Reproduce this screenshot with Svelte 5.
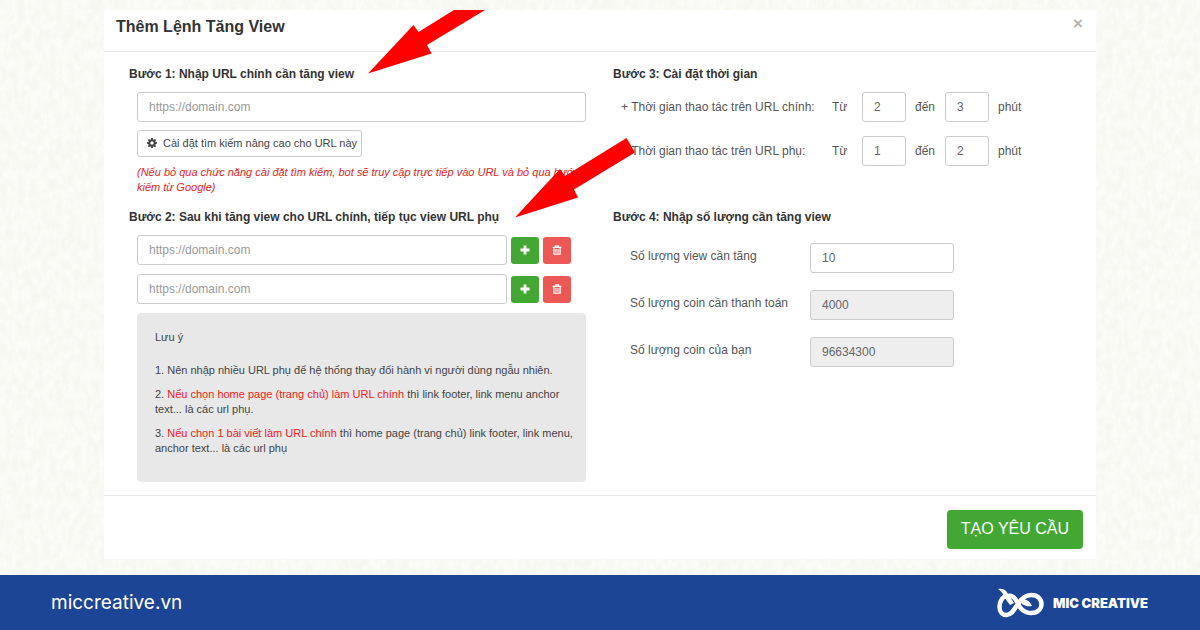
<script lang="ts">
    let mainUrl = $state("");
    let subUrls = $state(["", ""]);
    let times = $state([
        { id: "main", label: "Thời gian thao tác trên URL chính:", from: "2", to: "3" },
        { id: "sub", label: "Thời gian thao tác trên URL phụ:", from: "1", to: "2" }
    ]);
    let amounts = $state([
        { id: "views", label: "Số lượng view cần tăng", value: "10", disabled: false },
        { id: "cost", label: "Số lượng coin cần thanh toán", value: "4000", disabled: true },
        { id: "balance", label: "Số lượng coin của bạn", value: "96634300", disabled: true }
    ]);

    function addUrl(index: number) {
        subUrls.splice(index + 1, 0, "");
    }

    function removeUrl(index: number) {
        if (subUrls.length > 1) {
            subUrls.splice(index, 1);
        }
    }
</script>

<div class="page">
    <svg class="paper" aria-hidden="true">
        <filter id="grain">
            <feTurbulence type="fractalNoise" baseFrequency="0.16 0.1" numOctaves="3" seed="4" />
            <feColorMatrix values="0 0 0 0 0.78  0 0 0 0 0.77  0 0 0 0 0.68  0.4 0 0 0 -0.12" />
        </filter>
        <rect width="100%" height="100%" filter="url(#grain)" />
    </svg>

    <main class="stage">
        <section class="modal">
            <header class="modal_header">
                <h1>Thêm Lệnh Tăng View</h1>
                <button class="close" type="button" aria-label="Đóng">×</button>
            </header>

            <div class="modal_body">
                <section class="step">
                    <h2>Bước 1: Nhập URL chính cần tăng view</h2>
                    <div class="step_content">
                        <input class="field" type="text" placeholder="https://domain.com" aria-label="URL chính" bind:value={mainUrl} />
                        <button class="advanced" type="button">
                            <svg width="10" height="10" viewBox="0 0 16 16" aria-hidden="true">
                                <path fill="currentColor" fill-rule="evenodd" d="M6.7 0h2.6l.4 2.2 1.4.6L13 1.500 14.600 3.100l-1.300 1.900.6 1.400 2.100.4v2.500l-2.100.4-.6 1.400 1.300 1.900-1.700 1.700-1.900-1.300-1.300.6L9.300 16H6.700l-.4-2.100-1.400-.6L3 14.600 1.400 12.900 2.700 11l-.6-1.400L0 9.200V6.800l2.100-.4L2.700 5 1.400 3.100 3 1.500l1.900 1.300 1.400-.6zM8 5.200a2.800 2.800 0 1 0 0 5.600 2.800 2.800 0 0 0 0-5.600z" />
                            </svg>
                            Cài đặt tìm kiếm nâng cao cho URL này
                        </button>
                        <p class="hint">
                            (Nếu bỏ qua chức năng cài đặt tìm kiếm, bot sẽ truy cập trực tiếp vào URL và bỏ qua bước tìm<br />
                            kiếm từ Google)
                        </p>
                    </div>
                </section>

                <section class="step">
                    <h2>Bước 3: Cài đặt thời gian</h2>
                    {#each times as time (time.id)}
                        <div class="time_row">
                            <span class="time_label">+ {time.label}</span>
                            <label for="{time.id}_from">Từ</label>
                            <input class="field" id="{time.id}_from" type="text" bind:value={time.from} />
                            <label for="{time.id}_to">đến</label>
                            <input class="field" id="{time.id}_to" type="text" bind:value={time.to} />
                            <span>phút</span>
                        </div>
                    {/each}
                </section>

                <section class="step">
                    <h2>Bước 2: Sau khi tăng view cho URL chính, tiếp tục view URL phụ</h2>
                    <div class="step_content">
                        {#each subUrls as _, i}
                            <div class="url_row">
                                <input class="field" type="text" placeholder="https://domain.com" aria-label="URL phụ {i + 1}" bind:value={subUrls[i]} />
                                <button class="square add" type="button" aria-label="Thêm URL" onclick={() => addUrl(i)}>
                                    <svg width="10" height="10" viewBox="0 0 10 10" aria-hidden="true">
                                        <path fill="currentColor" d="M3.600.5h2.800v3.100h3.100v2.800H6.400v3.100H3.600V6.400H.5V3.600h3.100z" />
                                    </svg>
                                </button>
                                <button class="square remove" type="button" aria-label="Xóa URL" onclick={() => removeUrl(i)}>
                                    <svg width="10" height="10" viewBox="0 0 10 10" fill="none" stroke="currentColor" aria-hidden="true">
                                        <path stroke-width="1.300" d="M.6 2.300h8.800M3.500 2V.8h3V2M1.900 2.500v6.700h6.200V2.500" />
                                        <path stroke-width=".8" d="M3.800 4v3.800M5 4v3.800M6.200 4v3.800" />
                                    </svg>
                                </button>
                            </div>
                        {/each}
                        <div class="notes">
                            <p class="notes_title">Lưu ý</p>
                            <p>1. Nên nhập nhiều URL phụ để hệ thống thay đổi hành vi người dùng ngẫu nhiên.</p>
                            <p>2. <em>Nếu chọn home page (trang chủ) làm URL chính</em> thì link footer, link menu anchor text... là các url phụ.</p>
                            <p>3. <em>Nếu chọn 1 bài viết làm URL chính</em> thì home page (trang chủ) link footer, link menu, anchor text... là các url phụ</p>
                        </div>
                    </div>
                </section>

                <section class="step">
                    <h2>Bước 4: Nhập số lượng cần tăng view</h2>
                    <div class="amounts">
                        {#each amounts as amount (amount.id)}
                            <div class="amount_row">
                                <label for={amount.id}>{amount.label}</label>
                                <input class="field" id={amount.id} type="text" disabled={amount.disabled} bind:value={amount.value} />
                            </div>
                        {/each}
                    </div>
                </section>
            </div>

            <footer class="modal_footer">
                <button class="submit" type="button">TẠO YÊU CẦU</button>
            </footer>

            <!-- pointers to the two URL steps -->
            <svg class="arrow arrow_main" width="117" height="64" viewBox="0 0 117 64" aria-hidden="true">
                <path fill="#fe0000" d="M0 63.500 45.500 15l5 7L86 0h31L59 35l4.500 8.500z" />
            </svg>
            <svg class="arrow arrow_sub" width="120" height="80" viewBox="0 0 120 80" aria-hidden="true">
                <path fill="#fe0000" d="M0 79.500 45 31l5 7L111.500 0 120 14.500 59 51.500l4 8z" />
            </svg>
        </section>
    </main>

    <footer class="brand_bar">
        <a class="site" href="https://miccreative.vn">miccreative.vn</a>
        <div class="brand">
            <svg width="48" height="30" viewBox="0 0 48 30" aria-hidden="true">
                <path fill="#fff" d="M1 1c5-1 8 1 10 5l6 9-4 2-6-8C6 5 4 3 1 1z" />
                <path fill="none" stroke="#fff" stroke-width="4.500" d="M8 8C4 11 2.500 15 2.500 19c0 5 3 8 7 8 6 0 8-7 12-12 4-5 7-8 13-8 6 0 10 4 10 9s-4 9-10 9c-9 0-12-6-15-12-2-4-5-6-9-5" />
                <path fill="#fff" d="M22 11c6-1 11 2 13 7-6 1-11-1-13-7z" />
            </svg>
            <span>MIC CREATIVE</span>
        </div>
    </footer>
</div>

<style>
    :global(body) {
        margin: 0;
    }

    .page {
        position: relative;
        display: flex;
        flex-direction: column;
        min-height: 100vh;
        background-color: #fbfbf7;
        color: #555;
        font-family: "Liberation Sans", Arial, sans-serif;
        font-size: 12px;
        line-height: 20px;
    }

    .paper {
        position: absolute;
        width: 100%;
        height: 100%;
    }

    .stage {
        position: relative;
        flex: 1;
        padding: 10px 104px 16px;
    }

    .modal {
        position: relative;
        background-color: white;
    }

    .modal_header {
        display: flex;
        align-items: flex-start;
        justify-content: space-between;
        padding: 6px 13px 14px 12px;
        border-bottom: 1px solid #e8e8e8;
    }

    h1,
    h2,
    p {
        margin: 0;
    }

    h1 {
        color: #333;
        font-size: 16px;
        line-height: 21px;
    }

    h2 {
        margin-bottom: 8px;
        color: #333;
        font-size: 12px;
        line-height: 20px;
    }

    button,
    input {
        box-sizing: border-box;
        font: inherit;
    }

    button {
        padding: 0;
        border: none;
        cursor: pointer;
    }

    .close {
        background: none;
        color: #b5b5b5;
        font-size: 17px;
        font-weight: bold;
        line-height: 16px;
    }

    .modal_body {
        display: grid;
        grid-template-columns: 457px 1fr;
        gap: 12px 27px;
        padding: 12px 25px 13px;
    }

    .step_content {
        display: flex;
        flex-direction: column;
        align-items: flex-start;
        padding-left: 8px;
    }

    .field {
        width: 100%;
        height: 30px;
        padding: 0 11px 1px;
        border: 1px solid #ccc;
        border-radius: 3px;
        background-color: white;
        color: #666;
    }

    .field::placeholder {
        color: #999;
        opacity: 1;
    }

    .field:disabled {
        background-color: #eee;
    }

    .advanced {
        display: flex;
        align-items: center;
        gap: 6px;
        height: 27px;
        margin: 8px 0;
        padding: 0 4px 1px 9px;
        border: 1px solid #ccc;
        border-radius: 3px;
        background-color: white;
        color: #444;
        font-size: 11px;
    }

    .hint {
        color: #e02525;
        font-size: 11px;
        font-style: italic;
        line-height: 15px;
        white-space: nowrap;
    }

    .time_row {
        display: grid;
        grid-template-columns: 202px 21px 44px 21px 44px auto;
        column-gap: 9px;
        align-items: center;
        margin-bottom: 14px;
        padding-left: 8px;
    }

    .url_row {
        display: flex;
        align-items: center;
        gap: 4px;
        width: 434px;
        margin-bottom: 9px;
    }

    .url_row .field {
        flex: 1;
    }

    .square {
        display: flex;
        align-items: center;
        justify-content: center;
        width: 28px;
        height: 27px;
        border-radius: 3px;
        color: white;
    }

    .add {
        background-color: #43a733;
    }

    .remove {
        background-color: #ec5955;
    }

    .notes {
        box-sizing: border-box;
        width: 100%;
        padding: 17px 8px 17px 18px;
        border-radius: 4px;
        background-color: #e8e8e8;
        color: #444;
        font-size: 11px;
        line-height: 15px;
    }

    .notes p {
        margin-bottom: 9px;
    }

    .notes .notes_title {
        margin-bottom: 18px;
    }

    .notes em {
        color: #f02020;
        font-style: normal;
    }

    .amounts {
        display: flex;
        flex-direction: column;
        gap: 17px;
        padding: 8px 0 0 17px;
    }

    .amount_row {
        display: grid;
        grid-template-columns: 180px 144px;
    }

    .amount_row label {
        line-height: 27px;
    }

    .modal_footer {
        display: flex;
        justify-content: flex-end;
        padding: 14px 13px 10px;
        border-top: 1px solid #e8e8e8;
    }

    .submit {
        height: 39px;
        padding: 0 14px 1px;
        border-radius: 4px;
        background-color: #43a733;
        color: white;
        font-size: 16px;
    }

    .arrow {
        position: absolute;
    }

    .arrow_main {
        top: 0;
        left: 264px;
    }

    .arrow_sub {
        top: 128px;
        left: 411px;
    }

    .brand_bar {
        position: relative;
        display: flex;
        align-items: center;
        justify-content: space-between;
        height: 55px;
        padding: 0 52px 0 51px;
        background-color: #1c4595;
        color: white;
    }

    .site {
        color: white;
        font-family: Inter, sans-serif;
        font-size: 19px;
        text-decoration: none;
    }

    .brand {
        display: flex;
        align-items: center;
        gap: 8px;
        font-family: Inter, sans-serif;
        font-size: 13px;
        font-weight: 900;
    }
</style>
